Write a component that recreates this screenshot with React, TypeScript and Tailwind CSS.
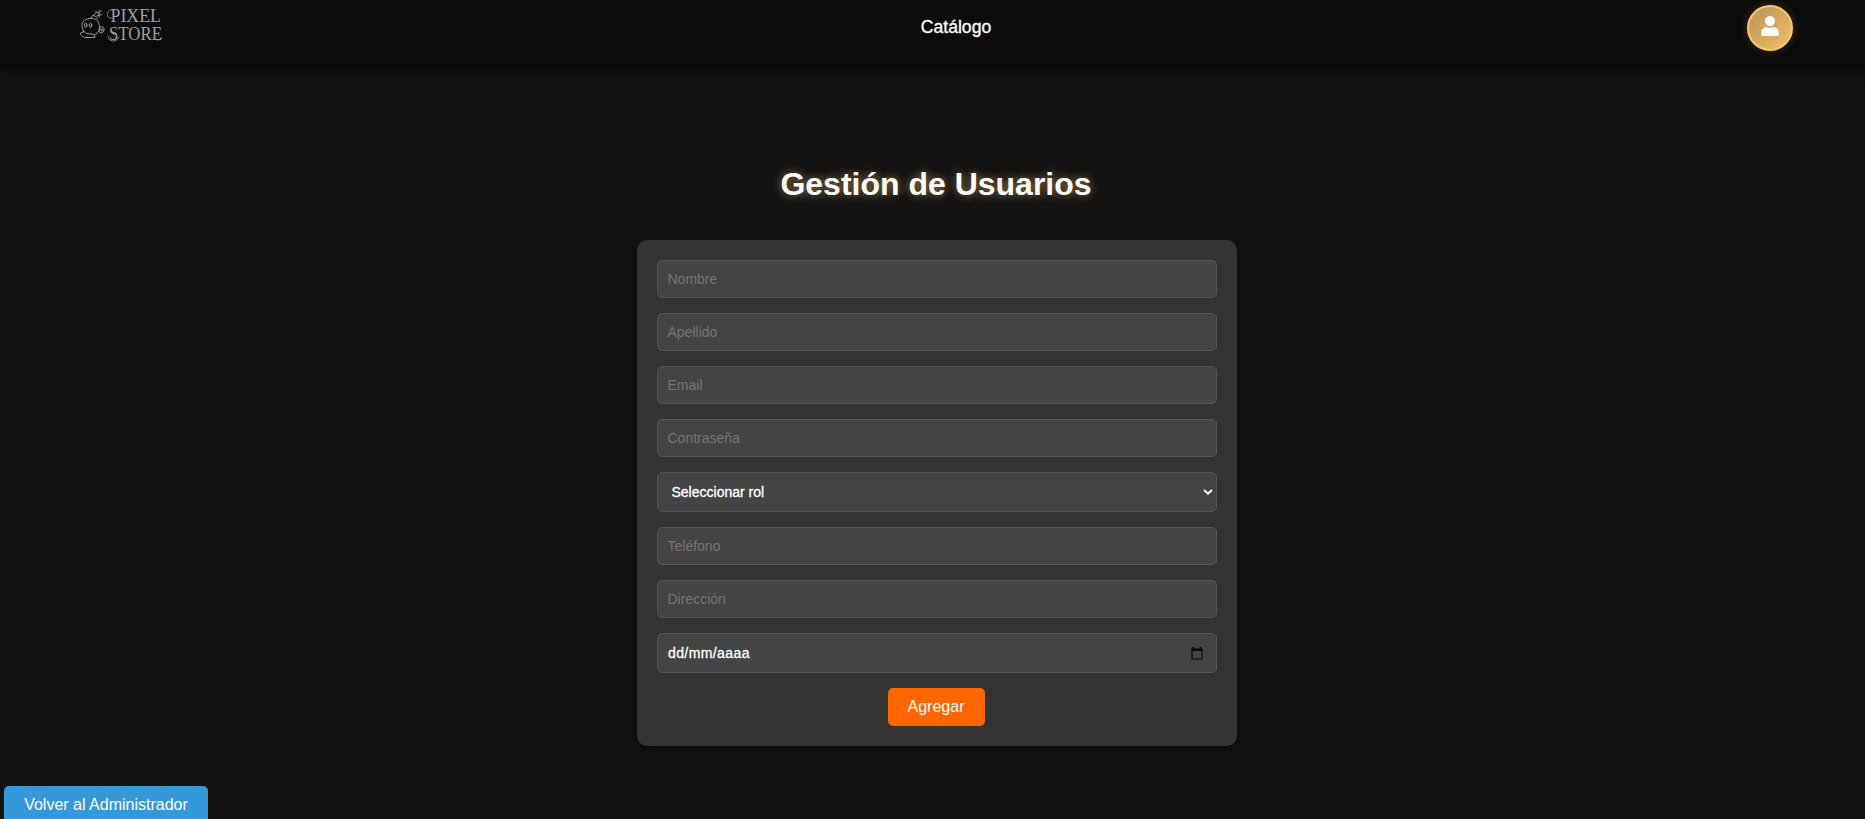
import { FaUser } from "react-icons/fa";

const field =
  "flex w-full items-center rounded-[5px] border border-[#555] bg-[#444] px-[9.5px] text-[14px] text-[#757575]";

function Field({ label }: { label: string }) {
  return <div className={`${field} h-[38px]`}>{label}</div>;
}

function Logo() {
  return (
    <svg
      className="ml-[79px] mt-[3px] h-[44px] w-[86px] overflow-visible"
      viewBox="0 -4 86 44"
      fill="none"
      stroke="#9a9a9a"
      strokeWidth="1"
      strokeLinecap="round"
      strokeLinejoin="round"
    >
      <path d="M5 25C1.500 20 2.500 14.500 7 12.500c4-2 9-1.500 11.500 1.500c3 4 2.500 9-.5 12-1.500 1.500-3 2-4 2" />
      <path d="M12 11.500l1.500-3c2 0 4 1 5 3.500M14.500 8.500l3-3.500M16.500 4l2.500 2.500 3-3M18 9l4.500-1.500M20 4v6" />
      <path d="M5 24.500l-3.500 1.500c-.5 2.500 2 4 5.500 4.500h9c0-3-2-3.500-4-3.500-3 0-5-.5-7-2.500z" />
      <ellipse cx="6.700" cy="18.300" rx="1.300" ry="2.200" />
      <ellipse cx="11.500" cy="18.300" rx="1.300" ry="2.200" />
      <path d="M20.500 21c1-2.500 4.500-1.500 4.500 1s-1 4-3 4-2.500-3-1-4h2.500M22 24l2-1" />
      <g fill="#a0a0a0" stroke="none" fontFamily="'Liberation Serif', serif">
        <text x="31.500" y="15" fontSize="18.500" textLength="50.500" lengthAdjust="spacingAndGlyphs">
          PIXEL
        </text>
        <text x="30" y="32.500" fontSize="19" textLength="53" lengthAdjust="spacingAndGlyphs">
          STORE
        </text>
      </g>
      <path
        d="M35 2.500c-4 0-6.500 2-6.500 5s2 4.500 4 3.500M29 29c0 3 2 5 5 5s5-1.500 6-4M76 32c2 1.500 5 1.500 7-1"
        strokeWidth=".8"
      />
    </svg>
  );
}

export default function App() {
  return (
    <div className="flex h-[819px] flex-col overflow-hidden bg-[#121212] font-['Liberation_Sans',Arial,sans-serif] text-white">
      <header className="grid h-[67px] shrink-0 grid-cols-[1fr_auto_1fr] items-start bg-[#0b0b0b] shadow-[0_4px_12px_rgba(0,0,0,0.5)]">
        <Logo />
        <a className="ml-[47px] mt-[17px] text-[17.6px] leading-[20px] [-webkit-text-stroke:0.3px_white]">Catálogo</a>
        <div className="mr-[72px] mt-[5px] flex size-[46px] items-center justify-center justify-self-end rounded-full border-2 border-[#ffc866] bg-linear-135 from-[#b9935a] to-[#f3bf66] pb-[4px] shadow-[0_0_10px_rgba(255,200,100,0.2)]">
          <FaUser className="h-[20px] w-[18px]" />
        </div>
      </header>
      <main className="flex w-[1874px] flex-1 flex-col items-center">
        <h1 className="mt-[99px] pr-[2px] text-[32px] font-bold leading-[36px] [text-shadow:0_0_10px_rgba(255,200,120,0.6)]">
          Gestión de Usuarios
        </h1>
        <form className="mt-[38px] flex w-[600px] flex-col items-center gap-[15px] rounded-[10px] bg-[#333] p-[20px] shadow-[0_4px_10px_rgba(0,0,0,0.3)]">
          <Field label="Nombre" />
          <Field label="Apellido" />
          <Field label="Email" />
          <Field label="Contraseña" />
          <div className={`${field} h-[40px] justify-between`}>
            <span className="pl-[4px] text-white [-webkit-text-stroke:0.3px_white]">Seleccionar rol</span>
            <svg className="-mr-[6.5px] h-[6px] w-[10px]" viewBox="0 0 10 6" fill="none" stroke="white" strokeWidth="2">
              <path d="M1 1l4 3.600 4-3.600" />
            </svg>
          </div>
          <Field label="Teléfono" />
          <Field label="Dirección" />
          <div className={`${field} h-[40px] justify-between`}>
            <span className="pl-[0.5px] tracking-[0.4px] text-white [-webkit-text-stroke:0.3px_white]">dd/mm/aaaa</span>
            <svg className="mr-[3.5px] h-[13px] w-[12px]" viewBox="0 0 12 13" fill="none" stroke="#0a0a0a">
              <path d="M1 2h10v10H1z" strokeWidth="1.200" />
              <path d="M.5 3h11M2.500 0v2M9.500 0v2" strokeWidth="1.800" />
            </svg>
          </div>
          <button type="button" className="mr-[2px] h-[38px] w-[97px] rounded-[5px] bg-[#ff6600] text-[16px]">
            Agregar
          </button>
        </form>
      </main>
      <footer className="h-[33px] shrink-0 pl-[4px]">
        <button type="button" className="h-[38px] w-[204px] whitespace-nowrap rounded-[5px] bg-[#3498db] text-[16px]">
          Volver al Administrador
        </button>
      </footer>
    </div>
  );
}
